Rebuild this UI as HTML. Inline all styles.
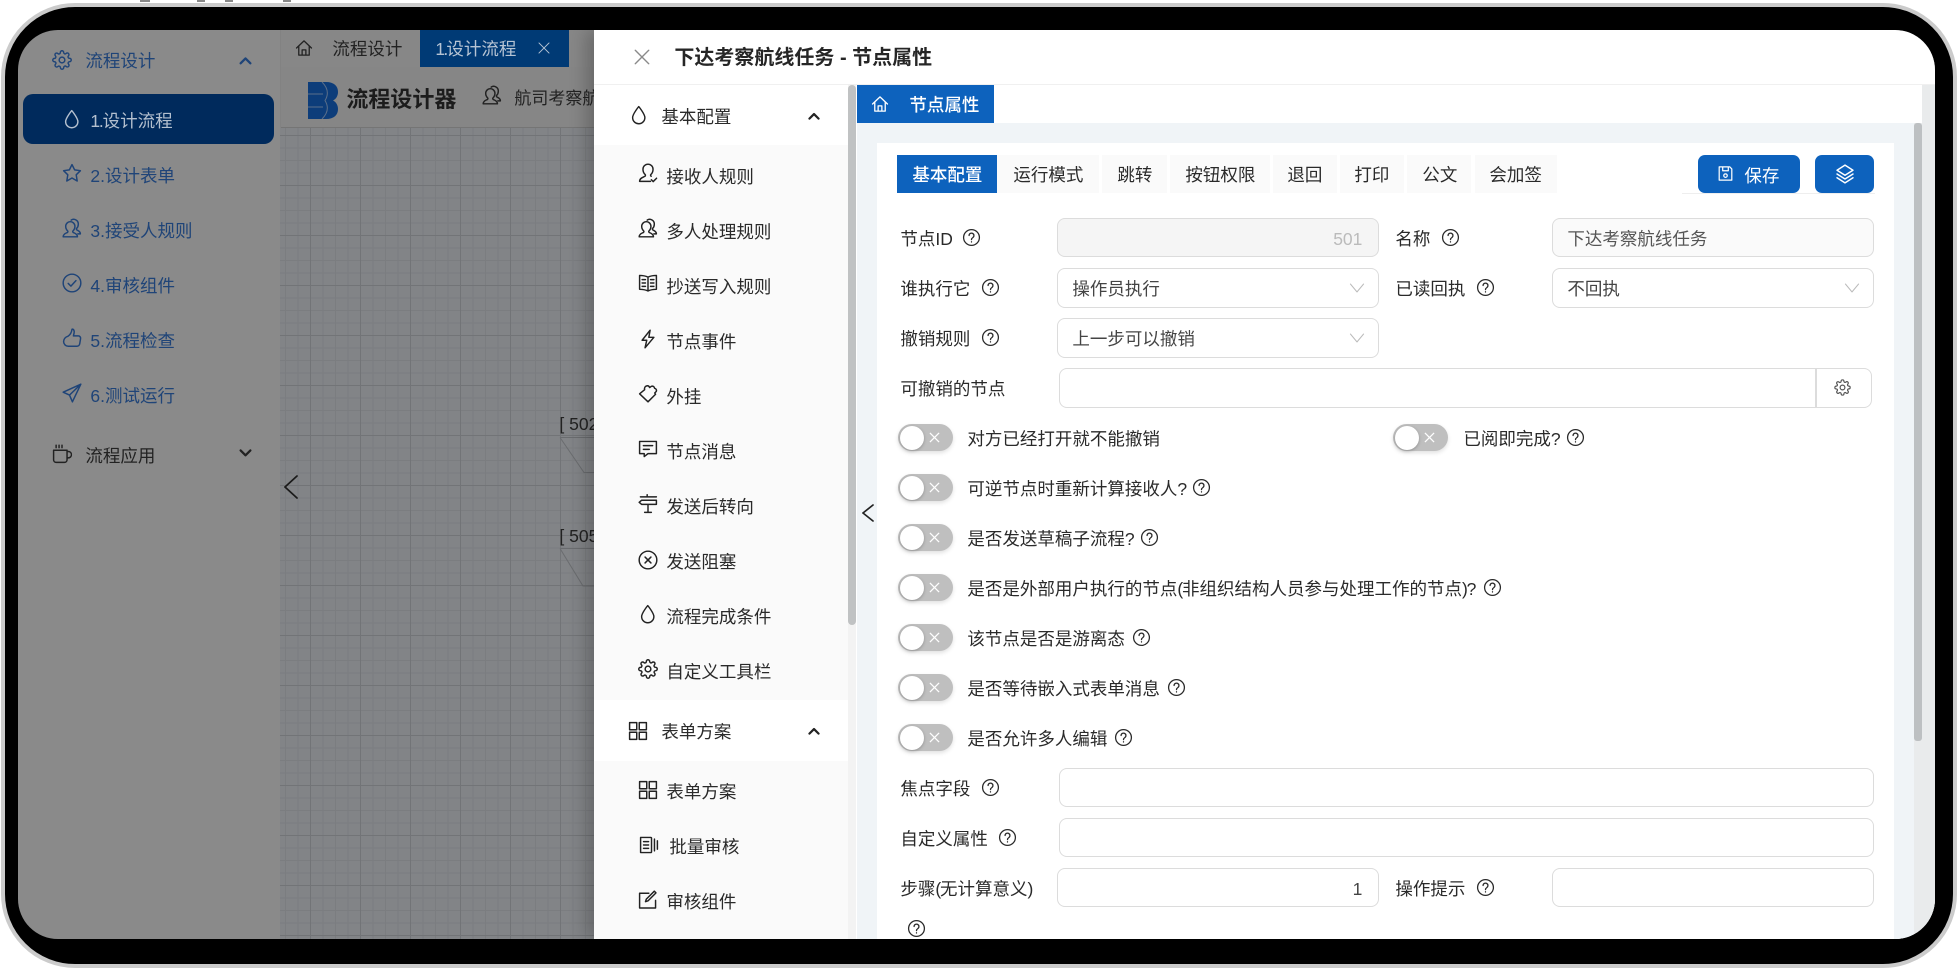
<!DOCTYPE html>
<html lang="zh-CN"><head><meta charset="utf-8"><title>流程设计</title>
<style>
html,body{margin:0;padding:0;width:1960px;height:970px;overflow:hidden;background:#fff}
body{font-family:"Liberation Sans","Noto Sans CJK SC",sans-serif;font-size:17.5px;color:#2a2a2a;position:relative}
#dev{position:absolute;left:1px;top:3px;width:1948px;height:957px;border:4px solid #cbcbcb;border-radius:74px;background:#000}
#scr{position:absolute;left:18px;top:30px;width:1917px;height:909px;border-radius:40px;overflow:hidden;background:#8a8a8a}
.a,.t,.i,.in,.sw{position:absolute}
.t{white-space:nowrap;line-height:24px;height:24px;transform:translate(-.6px,1px)}
.n{letter-spacing:-1.2px}
.i{fill:none;stroke:currentColor;stroke-width:1.75;stroke-linecap:round;stroke-linejoin:round;overflow:visible;transform:scale(1.12)}
.in{box-sizing:border-box;border:1.5px solid #dcdcdc;border-radius:8px;background:#fff}
.sw{width:55px;height:27px;border-radius:14px;background:#bfbfbf;box-shadow:0 2px 4px rgba(0,0,0,.12)}
.sw:before{content:"";position:absolute;left:1.5px;top:1.5px;width:24px;height:24px;border-radius:50%;background:#fff;box-shadow:0 1px 3px rgba(0,0,0,.25)}
.sw svg{position:absolute;left:31px;top:8px;width:11px;height:11px;stroke:#fff;stroke-width:1.4;fill:none}
.tb{position:absolute;top:125px;height:38px;background:#fafafa}
</style></head><body>
<svg width="0" height="0" style="position:absolute"><defs>
<symbol id="gear" viewBox="0 0 24 24"><circle cx="12" cy="12" r="3.4"/><path d="M19.4 15a1.65 1.65 0 0 0 .33 1.82l.06.06a2 2 0 0 1 0 2.83 2 2 0 0 1-2.83 0l-.06-.06a1.65 1.65 0 0 0-1.82-.33 1.65 1.65 0 0 0-1 1.51V21a2 2 0 0 1-2 2 2 2 0 0 1-2-2v-.09A1.65 1.65 0 0 0 9 19.4a1.65 1.65 0 0 0-1.82.33l-.06.06a2 2 0 0 1-2.83 0 2 2 0 0 1 0-2.83l.06-.06a1.65 1.65 0 0 0 .33-1.82 1.65 1.65 0 0 0-1.51-1H3a2 2 0 0 1-2-2 2 2 0 0 1 2-2h.09A1.65 1.65 0 0 0 4.6 9a1.65 1.65 0 0 0-.33-1.82l-.06-.06a2 2 0 0 1 0-2.83 2 2 0 0 1 2.83 0l.06.06a1.65 1.65 0 0 0 1.82.33H9a1.65 1.65 0 0 0 1-1.51V3a2 2 0 0 1 2-2 2 2 0 0 1 2 2v.09a1.65 1.65 0 0 0 1 1.51 1.65 1.65 0 0 0 1.82-.33l.06-.06a2 2 0 0 1 2.83 0 2 2 0 0 1 0 2.83l-.06.06a1.65 1.65 0 0 0-.33 1.82V9a1.65 1.65 0 0 0 1.51 1H21a2 2 0 0 1 2 2 2 2 0 0 1-2 2h-.09a1.65 1.65 0 0 0-1.51 1z"/></symbol>
<symbol id="drop" viewBox="0 0 24 24"><path d="M12 2C12 2 4.5 11 4.5 15.5a7.5 7.5 0 0 0 15 0C19.5 11 12 2 12 2z"/></symbol>
<symbol id="star" viewBox="0 0 24 24"><polygon points="12 2 15.09 8.26 22 9.27 17 14.14 18.18 21.5 12 18 5.82 21.5 7 14.14 2 9.27 8.91 8.26 12 2"/></symbol>
<symbol id="user" viewBox="0 0 24 24"><path d="M12 1.5a6 6 0 0 0-6 6c0 3 1.2 5 2.6 6.3.6.6.4 1.8-.4 2.2-2 1-6.2 2-6.2 6h13M12 1.5a6 6 0 0 1 6 6c0 3-1.2 5-2.6 6.3-.6.6-.4 1.6.4 2.1"/><path d="M16 20l2.2 2.2 4-4"/></symbol>
<symbol id="users" viewBox="0 0 24 24"><path d="M10 4.5a5.5 5.5 0 0 0-5.5 5.5c0 2.6 1.1 4.2 2.3 5.4.6.6.4 1.6-.4 2C4.600 18.300 1.500 19 1.500 22.500h17c0-3.500-3.100-4.200-4.900-5.100-.8-.4-1-1.400-.4-2 1.200-1.200 2.300-2.800 2.300-5.400A5.500 5.500 0 0 0 10 4.500z"/><path d="M11 2.600A5.500 5.500 0 0 1 19.500 7.500c0 2.500-1 4-2 5-.5.6-.3 1.500.4 1.900 1.500.8 4.100 1.500 4.100 4.600h-3"/></symbol>
<symbol id="check" viewBox="0 0 24 24"><circle cx="12" cy="12" r="10.500"/><path d="M7.500 12.500l3.200 3.200 6-6.500"/></symbol>
<symbol id="thumb" viewBox="0 0 24 24"><path d="M7 10c2.500-1.500 4.500-4.500 5-8.500 2.200-.3 3 2.200 2.500 4.500l-.8 3.500h5.800a2.800 2.800 0 0 1 2.700 3.300l-1 6a3.500 3.500 0 0 1-3.500 3H7.500A5.500 5.500 0 0 1 2 16.500 6.500 6.500 0 0 1 7 10z"/></symbol>
<symbol id="send" viewBox="0 0 24 24"><path d="M22.500 1.500L1.500 11l7.500 3.500 3.500 8zM22.500 1.500L9 14.500"/></symbol>
<symbol id="coffee" viewBox="0 0 24 24"><path d="M18 9h1.500a3.800 3.800 0 0 1 0 7.600H18M2 7.500h16V19a3 3 0 0 1-3 3H5a3 3 0 0 1-3-3zM5 1.500v3M8.500 1.500v3M12 1.500v3"/></symbol>
<symbol id="home" viewBox="0 0 24 24"><path d="M2 12L12 2.500 22 12M5 9.500V21.500h14V9.500M9.500 21.500v-7h5v7"/></symbol>
<symbol id="book" viewBox="0 0 24 24"><path d="M2 3c3.500 0 7 .5 10 2 3-1.500 6.500-2 10-2v16.500c-3.500 0-7 .5-10 2-3-1.500-6.500-2-10-2zM12 5v16.500M5 8h4M5 12h4M5 16h4M15 8h4M15 12h4M15 16h4"/></symbol>
<symbol id="bolt" viewBox="0 0 24 24"><path d="M14.500 1.500L5 13.500h5.500L8.500 22.500 19 10h-6z"/></symbol>
<symbol id="plug" viewBox="0 0 24 24"><path d="M2 13l6-5c-.5-2 .5-4 2.500-4.500 2-.4 3 .8 3.500 2l2-1.500c2-.6 3.600.6 3.800 2.300 2 .3 3 2.700 1.700 4.200l-1.500 1.500 1 1.500L12 22.500z"/></symbol>
<symbol id="msg" viewBox="0 0 24 24"><path d="M2 3h20v14.500H12L7.500 21v-3.500H2zM6.500 8h11M6.500 12.500h7"/></symbol>
<symbol id="sign" viewBox="0 0 24 24"><path d="M3 3.500h19M11 1v2.500M1.500 10l3-2.500H22v5H4.500zM12 12.500V22M8 22h8"/></symbol>
<symbol id="xc" viewBox="0 0 24 24"><circle cx="12" cy="12" r="10.500"/><path d="M8.500 8.500l7 7M15.500 8.500l-7 7"/></symbol>
<symbol id="apps" viewBox="0 0 24 24"><rect x="2" y="2" width="8.500" height="8.500"/><rect x="13.500" y="2" width="8.500" height="8.500"/><rect x="2" y="13.500" width="8.500" height="8.500"/><rect x="13.500" y="13.500" width="8.500" height="8.500"/></symbol>
<symbol id="batch" viewBox="0 0 24 24"><path d="M2 3h12a1 1 0 0 1 1 1v16a1 1 0 0 1-1 1H2zM5.500 8h6M5.500 12h6M5.500 16h6M18.500 5v14M22 7v10"/></symbol>
<symbol id="edit" viewBox="0 0 24 24"><path d="M21 12.500V21.500H2V4h11M21.500 3.500L12 13l-3 1 1-3 9.500-9.500z"/></symbol>
<symbol id="save" viewBox="0 0 24 24"><path d="M3 2.500h15l3 3v16H3zM8 2.500v5.500h8V2.500"/><circle cx="12" cy="15" r="2.500"/></symbol>
<symbol id="layers" viewBox="0 0 24 24"><path d="M12 1.500L2.500 7.500l9.500 6 9.500-6zM2.500 12l9.500 6 9.500-6M2.500 16.500l9.500 6 9.500-6"/></symbol>
<symbol id="help" viewBox="-1 -1 26 26"><circle cx="12" cy="12" r="10.800"/><path d="M8.700 9.300a3.300 3.300 0 1 1 5.200 2.700c-1.100.8-1.900 1.400-1.900 2.900M12 17.800v.4"/></symbol>
<symbol id="up" viewBox="0 0 24 24"><path d="M5 16l7-7 7 7"/></symbol>
<symbol id="down" viewBox="0 0 24 24"><path d="M5 9l7 7 7-7"/></symbol>
<symbol id="sel" viewBox="0 0 24 24"><path d="M2 6l10 12L22 6"/></symbol>
<symbol id="x" viewBox="0 0 24 24"><path d="M3 3l18 18M21 3L3 21"/></symbol>
</defs></svg>

<div class="a" style="left:140px;top:0;width:10px;height:2px;background:#888"></div>
<div class="a" style="left:197px;top:0;width:8px;height:2px;background:#888"></div>
<div class="a" style="left:225px;top:0;width:8px;height:2px;background:#888"></div>
<div class="a" style="left:283px;top:0;width:8px;height:2px;background:#888"></div>
<div id="dev"></div>

<div id="scr">
<!-- left sidebar -->
<svg class="i" style="left:35px;top:21px;width:18px;height:18px;color:#1f4478;stroke-width:1.7"><use href="#gear"/></svg>
<div class="t" style="left:68px;top:18px;color:#1f4478">流程设计</div>
<svg class="i" style="left:219.500px;top:22.500px;width:15px;height:15px;color:#1f4478;stroke-width:3.200"><use href="#up"/></svg>
<div class="a" style="left:5px;top:64px;width:251px;height:50px;border-radius:10px;background:#002a5c"></div>
<svg class="i" style="left:45.250px;top:79.750px;width:17.500px;height:17.500px;color:#b4c0cf"><use href="#drop"/></svg>
<div class="t" style="left:73px;top:78px;color:#b4c0cf"><span class="n">1.</span>设计流程</div>
<svg class="i" style="left:45px;top:134px;width:18px;height:18px;color:#1f4478"><use href="#star"/></svg>
<div class="t" style="left:73px;top:133px;color:#1f4478">2.设计表单</div>
<svg class="i" style="left:45px;top:189px;width:18px;height:18px;color:#1f4478"><use href="#users"/></svg>
<div class="t" style="left:73px;top:188px;color:#1f4478">3.接受人规则</div>
<svg class="i" style="left:45px;top:244px;width:18px;height:18px;color:#1f4478"><use href="#check"/></svg>
<div class="t" style="left:73px;top:243px;color:#1f4478">4.审核组件</div>
<svg class="i" style="left:45px;top:299px;width:18px;height:18px;color:#1f4478"><use href="#thumb"/></svg>
<div class="t" style="left:73px;top:298px;color:#1f4478">5.流程检查</div>
<svg class="i" style="left:45px;top:354px;width:18px;height:18px;color:#1f4478"><use href="#send"/></svg>
<div class="t" style="left:73px;top:353px;color:#1f4478">6.测试运行</div>
<svg class="i" style="left:35px;top:415px;width:18px;height:18px;color:#222"><use href="#coffee"/></svg>
<div class="t" style="left:68px;top:413px;color:#222">流程应用</div>
<svg class="i" style="left:219.500px;top:414.500px;width:15px;height:15px;color:#222;stroke-width:3.200"><use href="#down"/></svg>

<!-- main area -->
<div class="a" style="left:262px;top:0;width:320px;height:37px;background:#878787"></div>
<div class="a" style="left:262px;top:37px;width:320px;height:61px;background:#868686;border-bottom:1px solid #757575;box-sizing:border-box"></div>
<div class="a" style="left:262px;top:0;width:1px;height:909px;background:#828282"></div>
<svg class="i" style="left:278px;top:10px;width:16px;height:16px;color:#222"><use href="#home"/></svg>
<div class="t" style="left:315px;top:6px;color:#222">流程设计</div>
<div class="a" style="left:402px;top:0;width:149px;height:37px;background:#003a75"></div>
<div class="t" style="left:418px;top:6px;color:#b6c4d4"><span class="n" style="letter-spacing:-1.8px">1.</span>设计流程</div>
<svg class="i" style="left:520px;top:12px;width:12px;height:12px;color:#b6c4d4"><use href="#x"/></svg>
<!-- canvas grid -->
<div class="a" style="left:262px;top:98px;width:320px;height:811px;background-color:#828487;background-image:linear-gradient(#727477 1px,transparent 1px),linear-gradient(90deg,#727477 1px,transparent 1px),linear-gradient(#7b7d80 1px,transparent 1px),linear-gradient(90deg,#7b7d80 1px,transparent 1px);background-size:50px 50px,50px 50px,12.500px 12.500px,12.500px 12.500px;background-position:30px 7px,30px 7px,5px 7px,5px 7px"></div>
<svg class="a" style="left:266px;top:445px;width:14px;height:24px;fill:none;stroke:#1a1a1a;stroke-width:1.700;stroke-linecap:round" viewBox="0 0 14 24"><path d="M13 1L1 12 13 23"/></svg>
<svg class="a" style="left:290px;top:52px;width:30px;height:37px" viewBox="0 0 30 37"><path fill="#0d3d7a" d="M0 0H18C26 0 30 4 30 10C30 14 28 17 25 18.500C28 20 30 23 30 27C30 33 26 37 18 37H0z"/><path fill="none" stroke="#5b6f8a" stroke-width="1" d="M0 12H15M0 25H15M14 0C20 6 21 12 17 18.500C21 25 20 31 14 37"/></svg>
<div class="t" style="left:329px;top:50px;height:38px;line-height:38px;font-size:22px;font-weight:700;color:#1c1c1c">流程设计器</div>
<svg class="i" style="left:465px;top:56px;width:18px;height:18px;color:#222"><use href="#users"/></svg>
<div class="t" style="left:497px;top:56px;color:#222;font-size:17px">航司考察航线</div>
<div class="t" style="left:542px;top:381px;color:#222;font-size:17.500px">[ 502</div>
<div class="t" style="left:542px;top:493px;color:#222;font-size:17.500px">[ 505</div>
<svg class="a" style="left:262px;top:98px;width:320px;height:811px;fill:none;stroke:#6a6c6f"><path d="M280 309.500H320M280 309.500L304 344.500H330M280 420.500H320M280 420.500L303 458H330"/></svg>

<!-- modal -->
<div class="a" style="left:576px;top:0;width:1341px;height:909px;background:#fff;box-shadow:-8px 0 16px rgba(0,0,0,.22)">
 <div class="a" style="left:0;top:54px;width:1341px;height:1px;background:#f0f0f0"></div>
 <svg class="i" style="left:40px;top:19px;width:16px;height:16px;color:#8a8a8a;stroke-width:1.800"><use href="#x"/></svg>
 <div class="t" style="left:81px;top:11px;height:32px;line-height:32px;font-size:20px;font-weight:700;color:#262626">下达考察航线任务 - 节点属性</div>

 <!-- left menu -->
 <div class="a" style="left:0;top:55px;width:254px;height:854px;background:#fafafa"></div>
 <div class="a" style="left:0;top:55px;width:254px;height:60px;background:#fff"></div>
 <div class="a" style="left:0;top:670px;width:254px;height:61px;background:#fff"></div>
 <div class="a" style="left:254px;top:55px;width:8px;height:854px;background:#f3f3f3"></div>
 <div class="a" style="left:254px;top:55px;width:8px;height:540px;background:#c0c2c3;border-radius:4px"></div>
</div>
<div class="a" style="left:576px;top:0;width:1341px;height:909px;color:#2a2a2a">
 <svg class="i" style="left:35.750px;top:76.250px;width:17.500px;height:17.500px;color:#222"><use href="#drop"/></svg>
 <div class="t" style="left:68px;top:74px">基本配置</div>
 <svg class="i" style="left:212.500px;top:78.500px;width:14px;height:14px;color:#222;stroke-width:3.400"><use href="#up"/></svg>

 <svg class="i" style="left:45px;top:134px;width:18px;height:18px;color:#222"><use href="#user"/></svg>
 <div class="t" style="left:73px;top:134px">接收人规则</div>
 <svg class="i" style="left:45px;top:189px;width:18px;height:18px;color:#222"><use href="#users"/></svg>
 <div class="t" style="left:73px;top:189px">多人处理规则</div>
 <svg class="i" style="left:45px;top:244px;width:18px;height:18px;color:#222"><use href="#book"/></svg>
 <div class="t" style="left:73px;top:244px">抄送写入规则</div>
 <svg class="i" style="left:45px;top:300px;width:18px;height:18px;color:#222"><use href="#bolt"/></svg>
 <div class="t" style="left:73px;top:299px">节点事件</div>
 <svg class="i" style="left:45px;top:354px;width:18px;height:18px;color:#222"><use href="#plug"/></svg>
 <div class="t" style="left:73px;top:354px">外挂</div>
 <svg class="i" style="left:45px;top:410px;width:18px;height:18px;color:#222"><use href="#msg"/></svg>
 <div class="t" style="left:73px;top:409px">节点消息</div>
 <svg class="i" style="left:45px;top:465px;width:18px;height:18px;color:#222"><use href="#sign"/></svg>
 <div class="t" style="left:73px;top:464px">发送后转向</div>
 <svg class="i" style="left:45px;top:521px;width:18px;height:18px;color:#222"><use href="#xc"/></svg>
 <div class="t" style="left:73px;top:519px">发送阻塞</div>
 <svg class="i" style="left:45.250px;top:575.250px;width:17.500px;height:17.500px;color:#222"><use href="#drop"/></svg>
 <div class="t" style="left:73px;top:574px">流程完成条件</div>
 <svg class="i" style="left:45px;top:630px;width:18px;height:18px;color:#222"><use href="#gear"/></svg>
 <div class="t" style="left:73px;top:629px">自定义工具栏</div>

 <svg class="i" style="left:35px;top:692px;width:18px;height:18px;color:#222"><use href="#apps"/></svg>
 <div class="t" style="left:68px;top:689px">表单方案</div>
 <svg class="i" style="left:212.500px;top:693.500px;width:14px;height:14px;color:#222;stroke-width:3.400"><use href="#up"/></svg>
 <svg class="i" style="left:45px;top:751px;width:18px;height:18px;color:#222"><use href="#apps"/></svg>
 <div class="t" style="left:73px;top:749px">表单方案</div>
 <svg class="i" style="left:46px;top:806px;width:18px;height:18px;color:#222"><use href="#batch"/></svg>
 <div class="t" style="left:76px;top:804px">批量审核</div>
 <svg class="i" style="left:45px;top:861px;width:18px;height:18px;color:#222"><use href="#edit"/></svg>
 <div class="t" style="left:73px;top:859px">审核组件</div>

 <!-- right panel -->
 <div class="a" style="left:263px;top:93px;width:1065px;height:816px;background:#f0f4f7"></div>
 <div class="a" style="left:1328px;top:55px;width:13px;height:854px;background:#e9ebec"></div>
 <div class="a" style="left:1320px;top:93px;width:8px;height:816px;background:#e9ebec"></div>
 <div class="a" style="left:1320px;top:93px;width:8px;height:618px;background:#bdc0c2;border-radius:3px"></div>
 <div class="a" style="left:263px;top:55px;width:137px;height:38px;background:#0d62bd"></div>
 <svg class="i" style="left:278px;top:66px;width:16px;height:16px;color:#fff"><use href="#home"/></svg>
 <div class="t" style="left:316px;top:62px;color:#fff;font-weight:500">节点属性</div>
 <svg class="a" style="left:268px;top:474px;width:12px;height:18px;fill:none;stroke:#222;stroke-width:1.700;stroke-linecap:round" viewBox="0 0 12 18"><path d="M11 1L1 9l10 8"/></svg>

 <div class="a" style="left:283px;top:113px;width:1017px;height:796px;background:#fff"></div>
</div>

<div class="tb" style="left:879px;width:100px;background:#0d62bd"></div>
<div class="t" style="left:895px;top:132px;color:#fff;font-weight:500">基本配置</div>
<div class="tb" style="left:979px;width:102px"></div><div class="t" style="left:996px;top:132px">运行模式</div>
<div class="tb" style="left:1084px;width:65px"></div><div class="t" style="left:1100px;top:132px">跳转</div>
<div class="tb" style="left:1152px;width:100px"></div><div class="t" style="left:1168px;top:132px">按钮权限</div>
<div class="tb" style="left:1255px;width:64px"></div><div class="t" style="left:1270px;top:132px">退回</div>
<div class="tb" style="left:1322px;width:64px"></div><div class="t" style="left:1337px;top:132px">打印</div>
<div class="tb" style="left:1389px;width:64px"></div><div class="t" style="left:1405px;top:132px">公文</div>
<div class="tb" style="left:1457px;width:82px"></div><div class="t" style="left:1472px;top:132px">会加签</div>
<div class="a" style="left:1664px;top:163px;width:193px;height:1px;background:#eee"></div>
<div class="a" style="left:1680px;top:125px;width:102px;height:38px;border-radius:7px;background:#0d62bd"></div>
<svg class="i" style="left:1700px;top:136px;width:15px;height:15px;color:#fff"><use href="#save"/></svg>
<div class="t" style="left:1727px;top:133px;color:#fff">保存</div>
<div class="a" style="left:1797px;top:125px;width:59px;height:38px;border-radius:7px;background:#0d62bd"></div>
<svg class="i" style="left:1818px;top:135px;width:18px;height:18px;color:#fff"><use href="#layers"/></svg>

<!-- rows -->
<div class="t" style="left:883px;top:196px">节点ID</div>
<svg class="i" style="left:945px;top:199px;width:17px;height:17px;color:#2a2a2a"><use href="#help"/></svg>
<div class="in" style="left:1039px;top:188px;width:322px;height:39px;background:#f5f5f5"></div>
<div class="t" style="left:1315px;top:196px;width:30px;text-align:right;color:#bbb">501</div>
<div class="t" style="left:1378px;top:196px">名称</div>
<svg class="i" style="left:1424px;top:199px;width:17px;height:17px;color:#2a2a2a"><use href="#help"/></svg>
<div class="in" style="left:1534px;top:188px;width:322px;height:39px;background:#fafafa"></div>
<div class="t" style="left:1550px;top:196px;color:#555">下达考察航线任务</div>

<div class="t" style="left:883px;top:246px">谁执行它</div>
<svg class="i" style="left:964px;top:249px;width:17px;height:17px;color:#2a2a2a"><use href="#help"/></svg>
<div class="in" style="left:1039px;top:238px;width:322px;height:40px"></div>
<div class="t" style="left:1055px;top:246px;color:#444">操作员执行</div>
<svg class="i" style="left:1332px;top:251px;width:14px;height:14px;color:#bbb;stroke-width:1.700"><use href="#sel"/></svg>
<div class="t" style="left:1378px;top:246px">已读回执</div>
<svg class="i" style="left:1459px;top:249px;width:17px;height:17px;color:#2a2a2a"><use href="#help"/></svg>
<div class="in" style="left:1534px;top:238px;width:322px;height:40px"></div>
<div class="t" style="left:1550px;top:246px;color:#444">不回执</div>
<svg class="i" style="left:1827px;top:251px;width:14px;height:14px;color:#bbb;stroke-width:1.700"><use href="#sel"/></svg>

<div class="t" style="left:883px;top:296px">撤销规则</div>
<svg class="i" style="left:964px;top:299px;width:17px;height:17px;color:#2a2a2a"><use href="#help"/></svg>
<div class="in" style="left:1039px;top:288px;width:322px;height:40px"></div>
<div class="t" style="left:1055px;top:296px;color:#444">上一步可以撤销</div>
<svg class="i" style="left:1332px;top:301px;width:14px;height:14px;color:#bbb;stroke-width:1.700"><use href="#sel"/></svg>

<div class="t" style="left:883px;top:346px">可撤销的节点</div>
<div class="in" style="left:1041px;top:338px;width:813px;height:40px"></div>
<div class="a" style="left:1797px;top:338px;width:1.500px;height:40px;background:#dcdcdc"></div>
<svg class="i" style="left:1817px;top:350px;width:15px;height:15px;color:#555;stroke-width:1.700"><use href="#gear"/></svg>

<!-- switches -->
<div class="sw" style="left:880px;top:394px"><svg viewBox="0 0 12 12"><path d="M1 1l10 10M11 1L1 11"/></svg></div>
<div class="t" style="left:950px;top:396px">对方已经打开就不能撤销</div>
<div class="sw" style="left:1375px;top:394px"><svg viewBox="0 0 12 12"><path d="M1 1l10 10M11 1L1 11"/></svg></div>
<div class="t" style="left:1446px;top:396px">已阅即完成<span class="n">?</span></div>
<svg class="i" style="left:1549px;top:399px;width:17px;height:17px;color:#2a2a2a"><use href="#help"/></svg>

<div class="sw" style="left:880px;top:444px"><svg viewBox="0 0 12 12"><path d="M1 1l10 10M11 1L1 11"/></svg></div>
<div class="t" style="left:950px;top:446px">可逆节点时重新计算接收人<span class="n">?</span></div>
<svg class="i" style="left:1175px;top:449px;width:17px;height:17px;color:#2a2a2a"><use href="#help"/></svg>

<div class="sw" style="left:880px;top:494px"><svg viewBox="0 0 12 12"><path d="M1 1l10 10M11 1L1 11"/></svg></div>
<div class="t" style="left:950px;top:496px">是否发送草稿子流程<span class="n">?</span></div>
<svg class="i" style="left:1123px;top:499px;width:17px;height:17px;color:#2a2a2a"><use href="#help"/></svg>

<div class="sw" style="left:880px;top:544px"><svg viewBox="0 0 12 12"><path d="M1 1l10 10M11 1L1 11"/></svg></div>
<div class="t" style="left:950px;top:546px">是否是外部用户执行的节点<span class="n">(</span>非组织结构人员参与处理工作的节点<span class="n">)?</span></div>
<svg class="i" style="left:1466px;top:549px;width:17px;height:17px;color:#2a2a2a"><use href="#help"/></svg>

<div class="sw" style="left:880px;top:594px"><svg viewBox="0 0 12 12"><path d="M1 1l10 10M11 1L1 11"/></svg></div>
<div class="t" style="left:950px;top:596px">该节点是否是游离态</div>
<svg class="i" style="left:1115px;top:599px;width:17px;height:17px;color:#2a2a2a"><use href="#help"/></svg>

<div class="sw" style="left:880px;top:644px"><svg viewBox="0 0 12 12"><path d="M1 1l10 10M11 1L1 11"/></svg></div>
<div class="t" style="left:950px;top:646px">是否等待嵌入式表单消息</div>
<svg class="i" style="left:1150px;top:649px;width:17px;height:17px;color:#2a2a2a"><use href="#help"/></svg>

<div class="sw" style="left:880px;top:694px"><svg viewBox="0 0 12 12"><path d="M1 1l10 10M11 1L1 11"/></svg></div>
<div class="t" style="left:950px;top:696px">是否允许多人编辑</div>
<svg class="i" style="left:1097px;top:699px;width:17px;height:17px;color:#2a2a2a"><use href="#help"/></svg>

<div class="t" style="left:883px;top:746px">焦点字段</div>
<svg class="i" style="left:964px;top:749px;width:17px;height:17px;color:#2a2a2a"><use href="#help"/></svg>
<div class="in" style="left:1041px;top:738px;width:815px;height:39px"></div>

<div class="t" style="left:883px;top:796px">自定义属性</div>
<svg class="i" style="left:981px;top:799px;width:17px;height:17px;color:#2a2a2a"><use href="#help"/></svg>
<div class="in" style="left:1041px;top:788px;width:815px;height:39px"></div>

<div class="t" style="left:883px;top:846px">步骤<span class="n">(</span>无计算意义<span class="n">)</span></div>
<div class="in" style="left:1039px;top:838px;width:322px;height:39px"></div>
<div class="t" style="left:1315px;top:846px;width:30px;text-align:right;color:#444">1</div>
<div class="t" style="left:1378px;top:846px">操作提示</div>
<svg class="i" style="left:1459px;top:849px;width:17px;height:17px;color:#2a2a2a"><use href="#help"/></svg>
<div class="in" style="left:1534px;top:838px;width:322px;height:39px"></div>
<svg class="i" style="left:890px;top:890px;width:17px;height:17px;color:#2a2a2a"><use href="#help"/></svg>
</div>
</body></html>
